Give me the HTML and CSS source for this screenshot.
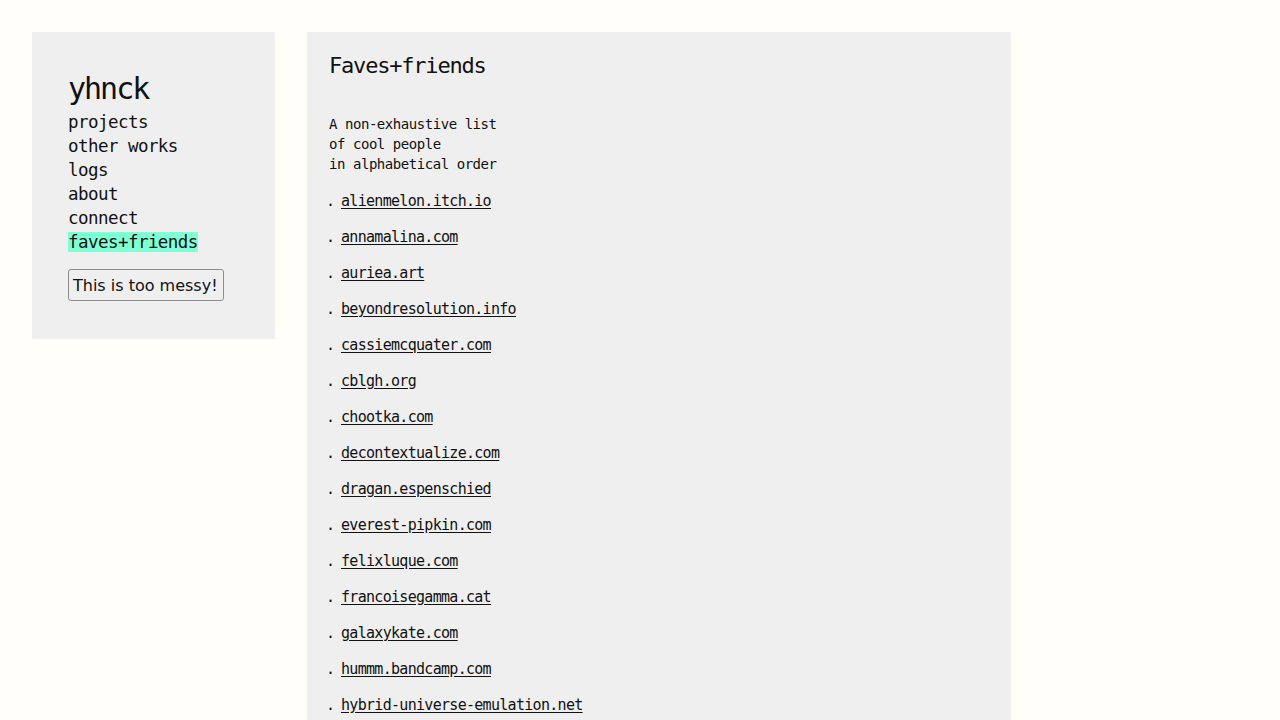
FILE: index.html
```html
<!DOCTYPE html>
<html lang="en">
<head>
<meta charset="utf-8">
<title>Faves+friends</title>
<link rel="stylesheet" href="styles.css">
</head>
<body>
<div class="page">
  <aside class="sidebar">
    <h1 class="site-title">yhnck</h1>
    <ul class="nav">
      <li><a class="nav-link" href="#">projects</a></li>
      <li><a class="nav-link" href="#">other works</a></li>
      <li><a class="nav-link" href="#">logs</a></li>
      <li><a class="nav-link" href="#">about</a></li>
      <li><a class="nav-link" href="#">connect</a></li>
      <li><a class="nav-link active" href="#">faves+friends</a></li>
    </ul>
    <button class="messy-btn" type="button">This is too messy!</button>
  </aside>
  <main class="content">
    <h2 class="page-title">Faves+friends</h2>
    <p class="intro">A non-exhaustive list<br>of cool people<br>in alphabetical order</p>
    <ul class="friends">
      <li><a href="#">alienmelon.itch.io</a></li>
      <li><a href="#">annamalina.com</a></li>
      <li><a href="#">auriea.art</a></li>
      <li><a href="#">beyondresolution.info</a></li>
      <li><a href="#">cassiemcquater.com</a></li>
      <li><a href="#">cblgh.org</a></li>
      <li><a href="#">chootka.com</a></li>
      <li><a href="#">decontextualize.com</a></li>
      <li><a href="#">dragan.espenschied</a></li>
      <li><a href="#">everest-pipkin.com</a></li>
      <li><a href="#">felixluque.com</a></li>
      <li><a href="#">francoisegamma.cat</a></li>
      <li><a href="#">galaxykate.com</a></li>
      <li><a href="#">hummm.bandcamp.com</a></li>
      <li><a href="#">hybrid-universe-emulation.net</a></li>
    </ul>
  </main>
  <div class="aside-space"></div>
</div>
</body>
</html>
```
FILE: styles.css
```css
html, body {
  margin: 0;
  padding: 0;
  background: #fffef9;
  color: #111;
  font-family: "DejaVu Sans Mono", "Liberation Mono", monospace;
}

.page {
  display: flex;
  align-items: flex-start;
  padding: 32px 0 0 32px;
  gap: 33px;
  height: 688px;
  overflow: hidden;
}

.sidebar {
  flex: 0 0 auto;
  width: 206px;
  padding: 41px 0 37px 36px;
  background: #efefef;
  box-shadow: 1px 1px 1px rgba(0, 0, 0, 0.05);
}

.site-title {
  margin: 0 0 5px 0;
  font-size: 30px;
  line-height: 32px;
  font-weight: normal;
  letter-spacing: -2px;
}

.nav {
  list-style: none;
  margin: 0;
  padding: 0;
}

.nav li {
  line-height: 24px;
  font-size: 17.5px;
  letter-spacing: -0.55px;
}

.nav-link {
  color: #111;
  text-decoration: none;
}

.nav-link.active {
  background: #7fffd4;
}

.messy-btn {
  display: block;
  margin-top: 15px;
  height: 32px;
  padding: 0 5px 0 4px;
  font-family: "DejaVu Sans", "Liberation Sans", sans-serif;
  font-size: 16px;
  color: #111;
  background: #efefef;
  border: 1px solid #8c8c8c;
  border-radius: 3px;
}

.content {
  flex: 0 0 auto;
  width: 681px;
  padding: 20px 0 40px 22px;
  min-height: 720px;
  background: #efefef;
  box-shadow: 1px 1px 1px rgba(0, 0, 0, 0.05);
}

.page-title {
  margin: 0;
  font-size: 22px;
  line-height: 28px;
  font-weight: normal;
  letter-spacing: -1.2px;
}

.intro {
  margin: 34px 0 0 0;
  font-size: 14px;
  line-height: 20px;
  letter-spacing: -0.45px;
}

.friends {
  list-style: none;
  margin: 9px 0 0 0;
  padding: 0;
}

.friends li {
  display: flex;
  align-items: center;
  height: 36px;
  font-size: 15px;
  letter-spacing: -0.7px;
}

.friends li::before {
  content: ".";
  flex: 0 0 15px;
  margin-left: -3px;
}

.friends a {
  color: #111;
  text-decoration: underline;
  text-underline-offset: 2px;
}

.aside-space {
  flex: 1 1 auto;
}
```
